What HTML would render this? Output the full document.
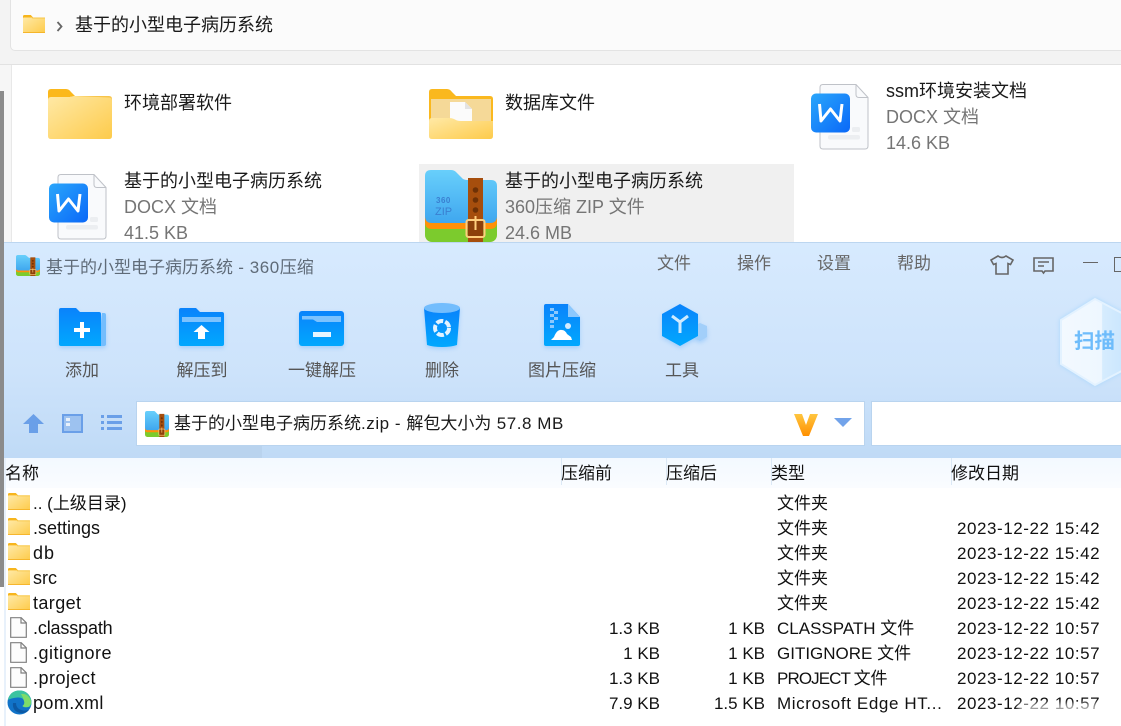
<!DOCTYPE html>
<html lang="zh"><head><meta charset="utf-8"><title>基于的小型电子病历系统</title>
<style>
html,body{margin:0;padding:0}
body{width:1121px;height:726px;overflow:hidden;position:relative;background:#fff;font-family:"Liberation Sans","Noto Sans CJK SC",sans-serif;color:#111}
.a{position:absolute}
.t{position:absolute;white-space:nowrap;line-height:24px;height:24px}
.e{font-size:18px;color:#1a1a1a}
.g{font-size:18px;color:#757575}
.m{font-size:17px;color:#666}
.l{font-size:17px;color:#555;text-align:center;width:120px}
.h{font-size:17px;color:#111;top:462px}
.r{font-size:17px;color:#111}
.n{font-size:18px;color:#111}
.s{text-align:right;width:80px}
.d{letter-spacing:.56px}
.x{letter-spacing:.55px}
svg{position:absolute;overflow:visible}
.ic{filter:drop-shadow(0 2px 2px rgba(50,150,250,.28))}
</style></head><body>
<svg width="0" height="0" style="position:absolute"><defs>
<linearGradient id="fg" x1="0" y1="0" x2="1" y2="1"><stop offset="0" stop-color="#ffe9a6"/><stop offset="1" stop-color="#fdcb4b"/></linearGradient>
<linearGradient id="wg" x1="0" y1="0" x2="1" y2="1"><stop offset="0" stop-color="#2aa6fb"/><stop offset="1" stop-color="#0a68f8"/></linearGradient>
<linearGradient id="bl" x1="0" y1="0" x2="0" y2="1"><stop offset="0" stop-color="#0a83fb"/><stop offset="1" stop-color="#01a8fe"/></linearGradient>
<linearGradient id="zb" x1="0" y1="0" x2="0" y2="1"><stop offset="0" stop-color="#68cffb"/><stop offset="1" stop-color="#3fa7ef"/></linearGradient>
<linearGradient id="vg" x1="0" y1="0" x2="0" y2="1"><stop offset="0" stop-color="#ffc640"/><stop offset="1" stop-color="#ff8f00"/></linearGradient>
<linearGradient id="hx" x1="0" y1="0" x2="1" y2="0"><stop offset="0" stop-color="#f3f9ff"/><stop offset=".55" stop-color="#eef7ff"/><stop offset=".56" stop-color="#d6ecfe"/><stop offset="1" stop-color="#c4e3fd"/></linearGradient>
<symbol id="sf" viewBox="0 0 24 18" preserveAspectRatio="none"><path d="M0 1.500Q0 0 1.500 0h7L11 2.500V4H0z" fill="#f7b51c"/><rect y="2.500" width="24" height="15.500" rx=".8" fill="url(#fg)"/><rect x="10" y="2.500" width="14" height="1" fill="#f7c645"/><rect y="17" width="24" height="1" fill="#f5b52a"/></symbol>
<symbol id="fl" viewBox="0 0 17 21" preserveAspectRatio="none"><path d="M.7.7h10.500l5.100 5.100v14.500H.7z" fill="#fcfcfc" stroke="#808080" stroke-width="1.200"/><path d="M11 .7v5.300h5.300" fill="none" stroke="#808080" stroke-width="1.200"/></symbol>
<symbol id="wd" viewBox="0 0 58 66"><path d="M12 .5h33l12 13V62q0 3-3 3H12q-3 0-3-3V3.500q0-3 3-3z" fill="#f9fafc" stroke="#bfc2c8" stroke-width="1"/><path d="M45 .5v10q0 3 3 3h9" fill="none" stroke="#bfc2c8"/><rect x="41" y="43" width="8" height="5" rx="1.500" fill="#eceef1"/><rect x="17" y="51" width="32" height="4.500" rx="2" fill="#eceef1"/><rect y="9.500" width="39" height="39" rx="5" fill="url(#wg)"/><path d="M8.500 20L10 37l9.500-12L29 37l2-17" fill="none" stroke="#fff" stroke-width="3" stroke-linejoin="round"/></symbol>
<symbol id="zp" viewBox="0 0 72 72" preserveAspectRatio="none"><rect y="40" width="72" height="32" rx="7" fill="#7ccb2d"/><path d="M0 44h72v8q0 7-7 7H7q-7 0-7-7z" fill="#ff9008"/><path d="M0 6q0-6 6-6h20q3 0 5 2l7 7q2 1 4 1h24q6 0 6 6v30q0 7-7 7H7q-7 0-7-7z" fill="url(#zb)"/><rect x="43" y="8" width="15" height="64" fill="#a64e0d"/><circle cx="50.500" cy="20" r="2.800" fill="#6e3106"/><circle cx="50.500" cy="30" r="2.800" fill="#6e3106"/><circle cx="50.500" cy="40" r="2.800" fill="#6e3106"/><rect x="41.500" y="50" width="18" height="17" rx="2" fill="#6e3106" fill-opacity=".45" stroke="#ffce7d" stroke-width="2"/><rect x="49.500" y="46" width="2" height="14" fill="#ffce7d"/></symbol>
</defs></svg>

<!-- explorer chrome -->
<div class="a" style="left:0;top:0;width:1121px;height:64px;background:#f3f3f3;border-bottom:1px solid #e2e2e2"></div>
<div class="a" style="left:10px;top:-8px;width:1125px;height:57px;background:#fbfbfb;border:1px solid #e3e3e3;border-radius:5px"></div>
<svg style="left:23px;top:15px" width="22" height="18"><use href="#sf" width="22" height="18"/></svg>
<svg style="left:56px;top:21px" width="8" height="11"><path d="M1.500 1l4 4.500-4 4.500" fill="none" stroke="#666" stroke-width="1.800"/></svg>
<div class="t e" style="left:75px;top:13px">基于的小型电子病历系统</div>
<div class="a" style="left:0;top:65px;width:11px;height:180px;background:#f6f6f6;border-right:1px solid #e8e8e8"></div>
<div class="a" style="left:0;top:91px;width:4px;height:496px;background:#8b8b8b"></div>

<!-- explorer items -->
<svg style="left:48px;top:89px" width="64" height="50" viewBox="0 0 64 50"><path d="M0 3q0-3 3-3h15q3 0 5 3l4 4v4H0z" fill="#fbb81c"/><path d="M22 7h39q3 0 3 3v4H22z" fill="#f7c44a"/><path d="M0 11q0-3 3-3h20l3-1 35 1.500q3 0 3 3V47q0 3-3 3H3q-3 0-3-3z" fill="url(#fg)"/></svg>
<div class="t e" style="left:124px;top:91px">环境部署软件</div>

<svg style="left:429px;top:89px" width="64" height="50" viewBox="0 0 64 50"><path d="M0 3q0-3 3-3h15q3 0 5 3l4 4h34q3 0 3 3v26H0z" fill="#fab81e"/><rect x="2" y="10" width="60" height="26" fill="#f5d998"/><path d="M21 13h15l7 7v16H21z" fill="#fbfbfb"/><path d="M36 13v7h7" fill="#e3e3e3"/><path d="M0 32q0-3 3-3h17q3 0 5 1l3 1.500q2 .500 4 .500h32v15q0 3-3 3H3q-3 0-3-3z" fill="url(#fg)"/></svg>
<div class="t e" style="left:505px;top:91px">数据库文件</div>

<svg style="left:811px;top:84px" width="58" height="66"><use href="#wd" width="58" height="66"/></svg>
<div class="t e" style="left:886px;top:79px">ssm环境安装文档</div>
<div class="t g" style="left:886px;top:105px">DOCX 文档</div>
<div class="t g" style="left:886px;top:131px">14.6 KB</div>

<svg style="left:49px;top:174px" width="58" height="66"><use href="#wd" width="58" height="66"/></svg>
<div class="t e" style="left:124px;top:169px">基于的小型电子病历系统</div>
<div class="t g" style="left:124px;top:195px">DOCX 文档</div>
<div class="t g" style="left:124px;top:221px">41.5 KB</div>

<div class="a" style="left:419px;top:164px;width:375px;height:78px;background:#f0f0f0"></div>
<svg style="left:425px;top:170px" width="72" height="72" viewBox="0 0 72 72"><use href="#zp" width="72" height="72"/><text x="11" y="33" font-size="8" fill="#3a7fd0" font-family="Liberation Sans" font-weight="bold" letter-spacing=".5">360</text><text x="10" y="45" font-size="11" fill="#3a7fd0" font-family="Liberation Sans">ZIP</text></svg>
<div class="t e" style="left:505px;top:169px">基于的小型电子病历系统</div>
<div class="t g" style="left:505px;top:195px">360压缩 ZIP 文件</div>
<div class="t g" style="left:505px;top:221px">24.6 MB</div>

<!-- 360 window -->
<div class="a" style="left:4px;top:242px;width:1117px;height:216px;background:linear-gradient(#d7eafe,#cde3fb 60%,#bfdaf6);border-top:1px solid #bcd6f0"></div>
<div class="a" style="left:4px;top:458px;width:2px;height:268px;background:#e8f1fb"></div>
<svg style="left:16px;top:255px" width="24" height="21"><use href="#zp" width="24" height="21"/></svg>
<div class="t m" style="left:46px;top:256px;color:#5f6b78">基于的小型电子病历系统<span class="x"> - 360</span>压缩</div>
<div class="t m" style="left:657px;top:252px">文件</div>
<div class="t m" style="left:737px;top:252px">操作</div>
<div class="t m" style="left:817px;top:252px">设置</div>
<div class="t m" style="left:897px;top:252px">帮助</div>

<svg style="left:990px;top:255px" width="24" height="20" viewBox="0 0 24 20"><path d="M8 1L1 5l2.500 4.500L6 8.500V19h12V8.500l2.500 1L23 5l-7-4q-4 3-8 0z" fill="none" stroke="#666" stroke-width="1.600"/></svg>
<svg style="left:1033px;top:257px" width="21" height="18" viewBox="0 0 21 18"><path d="M1 1h19v13H12l-1.500 2L9 14H1z" fill="none" stroke="#666" stroke-width="1.600"/><path d="M5 5h11M5 9h6" stroke="#666" stroke-width="1.600"/></svg>
<div class="a" style="left:1083px;top:262px;width:15px;height:1px;background:#666"></div>
<div class="a" style="left:1114px;top:257px;width:14px;height:13px;border:1px solid #666"></div>

<!-- toolbar icons -->
<svg class="ic" style="left:59px;top:308px" width="47" height="38" viewBox="0 0 47 38"><path d="M43 5h2q2 0 2 2v29q0 2-2 2H40z" fill="#73bdfd"/><path d="M0 2q0-2 2-2h15l4 4h19q2 0 2 2v32H2q-2 0-2-2z" fill="url(#bl)"/><path d="M21 14h4v6h6v4h-6v6h-4v-6h-6v-4h6z" fill="#fff"/></svg>
<svg class="ic" style="left:179px;top:308px" width="45" height="38" viewBox="0 0 45 38"><path d="M0 2q0-2 2-2h15l4 4h22q2 0 2 2v30q0 2-2 2H2q-2 0-2-2z" fill="url(#bl)"/><path d="M3 9h39v5H3z" fill="#7cc2fe"/><path d="M22.500 17l8 7H26v7h-7v-7h-4.500z" fill="#fff"/></svg>
<svg class="ic" style="left:299px;top:311px" width="45" height="35" viewBox="0 0 45 35"><rect width="45" height="35" rx="3" fill="url(#bl)"/><path d="M3 5h39v6H18l-4-2.500H3z" fill="#7cc2fe"/><rect x="14" y="21" width="18" height="5" fill="#e7f5ff"/></svg>
<svg class="ic" style="left:424px;top:303px" width="36" height="44" viewBox="0 0 36 44"><path d="M0 5h36l-3 37q-6 2-15 2t-15-2z" fill="url(#bl)"/><ellipse cx="18" cy="5" rx="18" ry="5" fill="#73bdfd"/><circle cx="18" cy="25" r="7" fill="none" stroke="#e3f3ff" stroke-width="4" stroke-dasharray="7 2"/></svg>
<svg class="ic" style="left:544px;top:304px" width="36" height="42" viewBox="0 0 36 42"><path d="M2 0h22l12 13v27q0 2-2 2H2q-2 0-2-2V2q0-2 2-2z" fill="url(#bl)"/><path d="M24 0l12 13H24z" fill="#8cc8fd"/><path d="M6 4h4v3H6zM10 7h4v3h-4zM6 10h4v3H6zM10 13h4v3h-4zM6 16h4v3H6zM6 21h4v3H6z" fill="#8cc8fd"/><circle cx="24" cy="22" r="3" fill="#d5ecff"/><path d="M7 36q2-2 3-3 3-8 8-7 3 0 5 4l4 3 1 3z" fill="#fff"/></svg>
<svg class="ic" style="left:662px;top:304px" width="45" height="42" viewBox="0 0 45 42"><path d="M30 23l8-4 7 3v11l-7 4-8-4z" fill="#a2cffa"/><path d="M18 0l18 10v22L18 42 0 32V10z" fill="url(#bl)"/><path d="M10 12l8 6 8-6M18 18v11" fill="none" stroke="#cfeaff" stroke-width="3"/></svg>

<div class="t l" style="left:22px;top:359px">添加</div>
<div class="t l" style="left:142px;top:359px">解压到</div>
<div class="t l" style="left:262px;top:359px">一键解压</div>
<div class="t l" style="left:382px;top:359px">删除</div>
<div class="t l" style="left:502px;top:359px">图片压缩</div>
<div class="t l" style="left:622px;top:359px">工具</div>

<!-- scan hexagon -->
<svg style="left:1060px;top:298px;filter:drop-shadow(0 0 2px #a9d7fc)" width="61" height="88" viewBox="0 0 61 88"><path d="M35 1l40 21v44L35 87 1 66V22z" fill="url(#hx)" stroke="#e3f2ff" stroke-width="2"/></svg>
<div class="t" style="left:1074px;top:330px;font-size:20.500px;font-weight:bold;color:#6ebcfb">扫描</div>

<!-- address row -->
<svg style="left:23px;top:414px" width="21" height="19" viewBox="0 0 21 19"><path d="M10.500 0L21 10h-6v9H6v-9H0z" fill="#6a9fe8"/></svg>
<div class="a" style="left:62px;top:414px;width:17px;height:15px;border:2px solid #6a9fe8;background:#9dc2f0"></div>
<div class="a" style="left:66px;top:418px;width:4px;height:3px;background:#e8f1fb"></div>
<div class="a" style="left:66px;top:423px;width:4px;height:3px;background:#e8f1fb"></div>
<svg style="left:101px;top:415px" width="21" height="15" viewBox="0 0 21 15"><path d="M0 0h3v3H0zM6 0h15v3H6zM0 6h3v3H0zM6 6h15v3H6zM0 12h3v3H0zM6 12h15v3H6z" fill="#6a9fe8"/></svg>
<div class="a" style="left:137px;top:402px;width:727px;height:43px;background:#fff;box-shadow:0 0 0 1px #b9d4ef"></div>
<div class="a" style="left:872px;top:402px;width:249px;height:43px;background:#fff;box-shadow:0 0 0 1px #b9d4ef"></div>
<div class="a" style="left:180px;top:446px;width:82px;height:12px;background:#b9d3ee"></div>
<svg style="left:145px;top:411px" width="24" height="26"><use href="#zp" width="24" height="26"/></svg>
<div class="t" style="left:174px;top:412px;font-size:17px;color:#1a1a1a">基于的小型电子病历系统<span class="x">.zip - </span>解包大小为<span class="x"> 57.8 MB</span></div>
<svg style="left:794px;top:414px" width="24" height="22" viewBox="0 0 24 22"><path d="M0 0h8l4 11 4-11h8L15 22H9z" fill="url(#vg)"/></svg>
<svg style="left:834px;top:418px" width="18" height="9" viewBox="0 0 18 9"><path d="M0 0h18L9 9z" fill="#72a3ea"/></svg>

<!-- list header -->
<div class="a" style="left:6px;top:458px;width:1115px;height:30px;background:linear-gradient(#f3f9ff,#fafcff)"></div>
<div class="a" style="left:561px;top:458px;width:1px;height:27px;background:#dbe8f5"></div>
<div class="a" style="left:666px;top:458px;width:1px;height:27px;background:#dbe8f5"></div>
<div class="a" style="left:771px;top:458px;width:1px;height:27px;background:#dbe8f5"></div>
<div class="a" style="left:951px;top:458px;width:1px;height:27px;background:#dbe8f5"></div>
<div class="t h" style="left:5px">名称</div>
<div class="t h" style="left:561px">压缩前</div>
<div class="t h" style="left:666px">压缩后</div>
<div class="t h" style="left:771px">类型</div>
<div class="t h" style="left:951px">修改日期</div>

<!-- rows -->
<svg style="left:8px;top:493px" width="22" height="17"><use href="#sf" width="22" height="17"/></svg>
<div class="t r" style="left:33px;top:492px">.. (上级目录)</div>
<div class="t r" style="left:777px;top:492px">文件夹</div>

<svg style="left:8px;top:518px" width="22" height="17"><use href="#sf" width="22" height="17"/></svg>
<div class="t n" style="left:33px;top:516px">.settings</div>
<div class="t r" style="left:777px;top:517px">文件夹</div>
<div class="t r d" style="left:957px;top:517px">2023-12-22 15:42</div>

<svg style="left:8px;top:543px" width="22" height="17"><use href="#sf" width="22" height="17"/></svg>
<div class="t n" style="left:33px;top:541px;letter-spacing:1px">db</div>
<div class="t r" style="left:777px;top:542px">文件夹</div>
<div class="t r d" style="left:957px;top:542px">2023-12-22 15:42</div>

<svg style="left:8px;top:568px" width="22" height="17"><use href="#sf" width="22" height="17"/></svg>
<div class="t n" style="left:33px;top:566px">src</div>
<div class="t r" style="left:777px;top:567px">文件夹</div>
<div class="t r d" style="left:957px;top:567px">2023-12-22 15:42</div>

<svg style="left:8px;top:593px" width="22" height="17"><use href="#sf" width="22" height="17"/></svg>
<div class="t n" style="left:33px;top:591px;letter-spacing:.4px">target</div>
<div class="t r" style="left:777px;top:592px">文件夹</div>
<div class="t r d" style="left:957px;top:592px">2023-12-22 15:42</div>

<svg style="left:10px;top:617px" width="17" height="21"><use href="#fl" width="17" height="21"/></svg>
<div class="t n" style="left:33px;top:616px;letter-spacing:-.15px">.classpath</div>
<div class="t r s" style="left:580px;top:617px">1.3 KB</div>
<div class="t r s" style="left:685px;top:617px">1 KB</div>
<div class="t r" style="left:777px;top:617px">CLASSPATH 文件</div>
<div class="t r d" style="left:957px;top:617px">2023-12-22 10:57</div>

<svg style="left:10px;top:642px" width="17" height="21"><use href="#fl" width="17" height="21"/></svg>
<div class="t n" style="left:33px;top:641px;letter-spacing:.5px">.gitignore</div>
<div class="t r s" style="left:580px;top:642px">1 KB</div>
<div class="t r s" style="left:685px;top:642px">1 KB</div>
<div class="t r" style="left:777px;top:642px">GITIGNORE 文件</div>
<div class="t r d" style="left:957px;top:642px">2023-12-22 10:57</div>

<svg style="left:10px;top:667px" width="17" height="21"><use href="#fl" width="17" height="21"/></svg>
<div class="t n" style="left:33px;top:666px;letter-spacing:.5px">.project</div>
<div class="t r s" style="left:580px;top:667px">1.3 KB</div>
<div class="t r s" style="left:685px;top:667px">1 KB</div>
<div class="t r" style="left:777px;top:667px"><span style="letter-spacing:-.9px">PROJECT </span>文件</div>
<div class="t r d" style="left:957px;top:667px">2023-12-22 10:57</div>

<svg style="left:7px;top:690px" width="25" height="25" viewBox="0 0 25 25"><circle cx="12.500" cy="12.500" r="12" fill="#1173c8"/><path d="M1 10Q3 .500 12.500.500 22 .500 24.500 11q.500 5-3 6-5 1-6-1 3-2 2-5-2-4-7-3.500Q4 8 1 10z" fill="#3cc4a0"/><path d="M14 4q7-1 10 7 0 5-3 6-4 .500-5.500-1 2.500-2 1.500-5-1-4-3-7z" fill="#7ddc6a"/><path d="M6 13q-1 8 7 10 6 .500 9-3-6 1.500-10-1-3-2-3-6z" fill="#0c59a4"/></svg>
<div class="t n" style="left:33px;top:691px;letter-spacing:.4px">pom.xml</div>
<div class="t r s" style="left:580px;top:692px">7.9 KB</div>
<div class="t r s" style="left:685px;top:692px">1.5 KB</div>
<div class="t r" style="left:777px;top:692px;letter-spacing:.62px">Microsoft Edge HT...</div>
<div class="t r d" style="left:957px;top:692px">2023-12-22 10:57</div>
<div class="a" style="left:1018px;top:703px;width:90px;height:11px;background:rgba(255,255,255,.6);filter:blur(2px)"></div>
</body></html>
